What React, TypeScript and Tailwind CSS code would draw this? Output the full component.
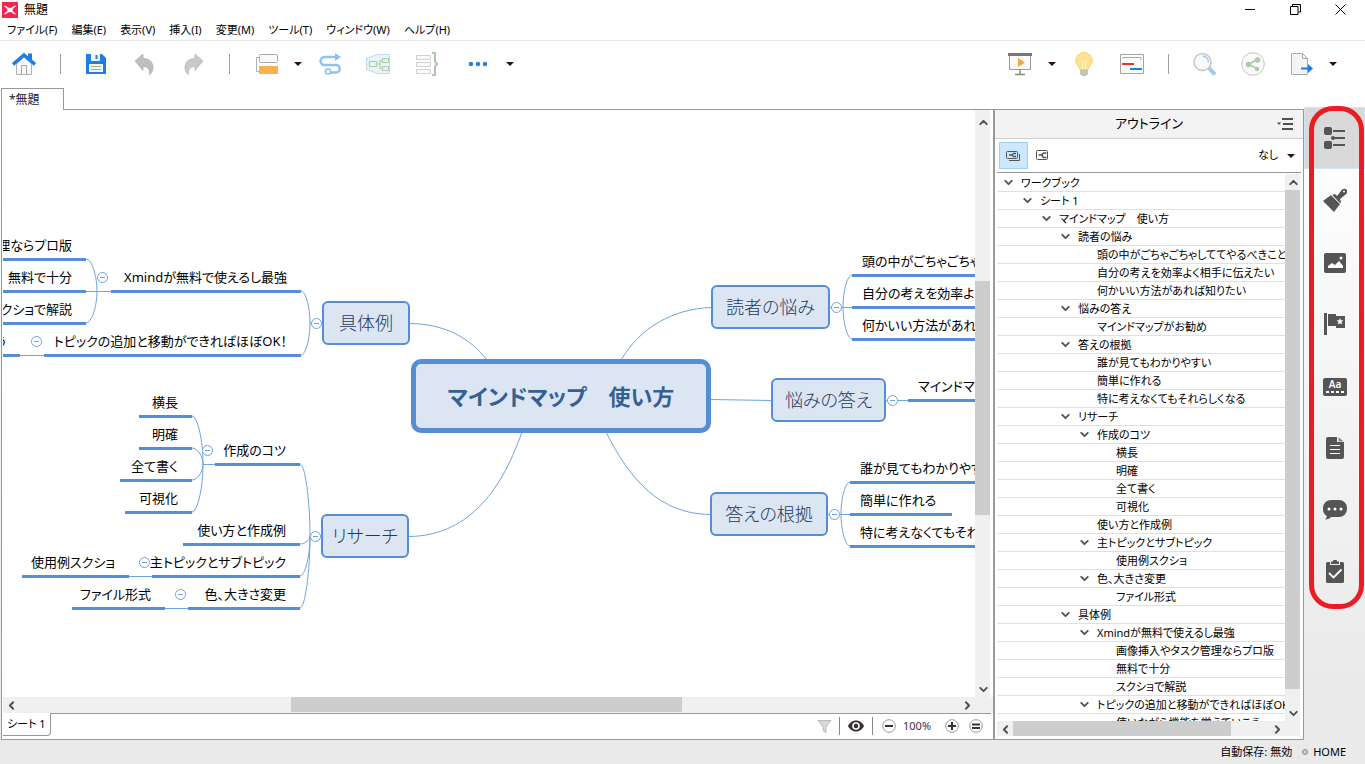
import React, { useState } from 'react';
import { ChevronDown, ChevronLeft, ChevronRight, ChevronUp } from 'lucide-react';

const menus = ['ファイル(F)', '編集(E)', '表示(V)', '挿入(I)', '変更(M)', 'ツール(T)', 'ウィンドウ(W)', 'ヘルプ(H)'];

const outline = [
  { level: 0, text: 'ワークブック', open: true },
  { level: 1, text: 'シート 1', open: true },
  { level: 2, text: 'マインドマップ　使い方', open: true },
  { level: 3, text: '読者の悩み', open: true },
  { level: 4, text: '頭の中がごちゃごちゃしててやるべきことが' },
  { level: 4, text: '自分の考えを効率よく相手に伝えたい' },
  { level: 4, text: '何かいい方法があれば知りたい' },
  { level: 3, text: '悩みの答え', open: true },
  { level: 4, text: 'マインドマップがお勧め' },
  { level: 3, text: '答えの根拠', open: true },
  { level: 4, text: '誰が見てもわかりやすい' },
  { level: 4, text: '簡単に作れる' },
  { level: 4, text: '特に考えなくてもそれらしくなる' },
  { level: 3, text: 'リサーチ', open: true },
  { level: 4, text: '作成のコツ', open: true },
  { level: 5, text: '横長' },
  { level: 5, text: '明確' },
  { level: 5, text: '全て書く' },
  { level: 5, text: '可視化' },
  { level: 4, text: '使い方と作成例' },
  { level: 4, text: '主トピックとサブトピック', open: true },
  { level: 5, text: '使用例スクショ' },
  { level: 4, text: '色、大きさ変更', open: true },
  { level: 5, text: 'ファイル形式' },
  { level: 3, text: '具体例', open: true },
  { level: 4, text: 'Xmindが無料で使えるし最強', open: true },
  { level: 5, text: '画像挿入やタスク管理ならプロ版' },
  { level: 5, text: '無料で十分' },
  { level: 5, text: 'スクショで解説' },
  { level: 4, text: 'トピックの追加と移動ができればほぼOK！', open: true },
  { level: 5, text: '使いながら機能を覚えていこう' },
];

// map coordinates of the canvas' top left corner
const scroll = { x: 3, y: 110 };

const topics = [
  { text: '具体例', x: 322, y: 301, w: 88 },
  { text: 'リサーチ', x: 321, y: 514, w: 88 },
  { text: '読者の悩み', x: 711, y: 285, w: 119 },
  { text: '悩みの答え', x: 771, y: 378, w: 115 },
  { text: '答えの根拠', x: 710, y: 492, w: 118 },
];

// y is the underline of the subtopic
const leftLeaves = [
  { text: '画像挿入やタスク管理ならプロ版', x: -140, w: 226, y: 258 },
  { text: '無料で十分', x: -10, w: 96, y: 290 },
  { text: 'スクショで解説', x: -24, w: 110, y: 322 },
  { text: '使いながら機能を覚えていこう', x: -190, w: 210, y: 354 },
  { text: 'Xmindが無料で使えるし最強', x: 111, w: 190, y: 290 },
  { text: 'トピックの追加と移動ができればほぼOK！', x: 44, w: 257, y: 354 },
  { text: '横長', x: 139, w: 53, y: 415 },
  { text: '明確', x: 139, w: 53, y: 447 },
  { text: '全て書く', x: 120, w: 72, y: 479 },
  { text: '可視化', x: 125, w: 67, y: 511 },
  { text: '作成のコツ', x: 215, w: 85, y: 463 },
  { text: '使い方と作成例', x: 183, w: 117, y: 543 },
  { text: '主トピックとサブトピック', x: 152, w: 148, y: 575 },
  { text: '使用例スクショ', x: 22, w: 107, y: 575 },
  { text: '色、大きさ変更', x: 188, w: 112, y: 607 },
  { text: 'ファイル形式', x: 72, w: 93, y: 607 },
];

const rightLeaves = [
  { text: '頭の中がごちゃごちゃしててやるべきことが', x: 852, w: 300, y: 274 },
  { text: '自分の考えを効率よく相手に伝えたい', x: 852, w: 260, y: 306 },
  { text: '何かいい方法があれば知りたい', x: 852, w: 220, y: 338 },
  { text: 'マインドマップがお勧め', x: 908, w: 170, y: 399 },
  { text: '誰が見てもわかりやすい', x: 850, w: 180, y: 481 },
  { text: '簡単に作れる', x: 850, w: 102, y: 513 },
  { text: '特に考えなくてもそれらしくなる', x: 850, w: 220, y: 545 },
];

const folds = [
  [102, 277], [36, 341], [316, 323], [207, 450], [315, 536],
  [144, 562], [180, 594], [836, 307], [892, 400], [834, 514],
];

// curve from a parent's joint to the end of a child's underline
const bend = (px: number, py: number, cx: number, cy: number) =>
  `M${cx} ${cy}C${(px + cx) / 2} ${cy} ${px} ${(py + cy) / 2} ${px} ${py}`;

const lines = [
  'M410 323.5C445 324 470 338 487 360',
  'M409 536.5C465 536 500 495 522 432',
  'M711 307.5C672 309 640 328 621 360',
  'M710 514.5C660 514 630 480 606 432',
  'M710 399.5L771 400.5',
  'M322 323.5H310', bend(310, 323, 301, 291), bend(310, 323, 301, 355),
  'M111 291.5H86', bend(97, 291, 86, 259), bend(97, 291, 86, 323),
  'M44 355.5H20',
  'M321 536.5H310', bend(310, 536, 300, 464), bend(310, 536, 300, 544), bend(310, 536, 300, 576), bend(310, 536, 300, 608),
  'M215 464.5H203', bend(203, 464, 192, 416), bend(203, 464, 192, 448), bend(203, 464, 192, 480), bend(203, 464, 192, 512),
  'M152 576.5H129', 'M188 608.5H165',
  'M830 307.5H852', bend(843, 307, 852, 275), bend(843, 307, 852, 339),
  'M886 400.5H908',
  'M828 514.5H850', bend(841, 514, 850, 482), bend(841, 514, 850, 546),
];

const Caret = () => (
  <svg className="w-2 h-4 shrink-0" viewBox="0 0 8 16" fill="#2b1210">
    <path d="M0 6h8l-4 4z" />
  </svg>
);

const ToolButton: React.FC<{ label: string; children: React.ReactNode }> = ({ label, children }) => (
  <button type="button" aria-label={label} className="w-6 h-6 shrink-0">
    <svg className="w-6 h-6" viewBox="0 0 24 24" fill="none">{children}</svg>
  </button>
);

const Divider = () => <span className="w-px h-5 bg-[#a0a0a0]" />;

const Toolbar = () => (
  <div className="flex items-center h-[47px] pl-3 pr-7 pb-[2px] gap-6">
    <ToolButton label="ホーム">
      <path d="M4.500 12v10.500h15V12L12 5z" fill="#fafafa" stroke="#b0b0b0" />
      <path d="M9.500 22v-8.500h5V22" stroke="#a8a8a8" />
      <path d="M16 1.500h4v7l-4-3z" fill="#1f7fe0" />
      <path d="M1 12.500L12 3l11 9.500" stroke="#1f7fe0" strokeWidth="3.500" />
    </ToolButton>
    <Divider />
    <ToolButton label="保存">
      <path d="M1 2h16l4 4v16H1z" fill="#1f7fe0" />
      <path d="M6 2h9v7H6z" fill="#f4f4f4" />
      <path d="M11.500 3v4" stroke="#1f7fe0" strokeWidth="2" />
      <path d="M4 12h14v8H4z" fill="#f4f4f4" />
      <path d="M6 14.500h10M6 17.500h10" stroke="#aaa" />
    </ToolButton>
    <ToolButton label="元に戻す">
      <path d="M2 9l8-7v4.500c7 0 10 4 10 9 0 3-1 5.500-3.500 7 .5-5-1.500-8-6.500-8v4z" fill="#bcc0bc" stroke="#acaeac" strokeWidth=".7" />
    </ToolButton>
    <ToolButton label="やり直し">
      <path d="M22 9l-8-7v4.500c-7 0-10 4-10 9 0 3 1 5.500 3.500 7-.5-5 1.500-8 6.500-8v4z" fill="#c4ccc4" stroke="#b0b6b0" strokeWidth=".7" />
    </ToolButton>
    <Divider />
    <div className="flex items-center gap-4 -mr-2">
      <ToolButton label="トピック">
        <path d="M5 5.500H2.500v14H5" stroke="#b0b0b0" />
        <rect x="5.500" y="2.500" width="18" height="8" rx="1" fill="#fafafa" stroke="#aaa" />
        <path d="M5 14h19v8H5z" fill="#fbb04e" />
      </ToolButton>
      <button type="button" aria-label="トピックの種類"><Caret /></button>
    </div>
    <ToolButton label="関連">
      <path d="M17 5H6.500a4 4 0 000 8H18a3.700 3.700 0 010 7.500h-5.500" stroke="#8ec1f3" strokeWidth="2.400" />
      <path d="M17 1l6 4-6 4z" fill="#8ec1f3" />
      <circle cx="10" cy="19.500" r="2.500" fill="#fff" stroke="#8ec1f3" strokeWidth="1.600" />
    </ToolButton>
    <ToolButton label="境界線">
      <path d="M.5 6.500l11-4h12v19h-12l-11-4z" fill="#e4f6f6" stroke="#9dc4f0" strokeDasharray="1.500 1" />
      <path d="M3.500 9.500h7v5h-7zM16.500 6.500h6v4h-6zM16.500 14.500h6v4h-6zM11 12h3M16 8.500h-2v8h2" stroke="#b6cdb2" strokeWidth="1.200" />
    </ToolButton>
    <ToolButton label="要約">
      <path d="M2.500 3.500h14v4h-14zM2.500 10.500h14v4h-14zM2.500 17.500h14v4h-14z" fill="#fafafa" stroke="#d2d2d2" />
      <path d="M18 1h3v9l2.500 2-2.500 2v9h-3" stroke="#b3c4b0" strokeWidth="2" />
    </ToolButton>
    <div className="flex items-center gap-4 ml-1">
      <ToolButton label="その他">
        <circle cx="5" cy="12" r="2.200" fill="#1f7fe0" />
        <circle cx="12" cy="12" r="2.200" fill="#1f7fe0" />
        <circle cx="19" cy="12" r="2.200" fill="#1f7fe0" />
      </ToolButton>
      <button type="button" aria-label="その他の挿入"><Caret /></button>
    </div>

    <div className="flex items-center gap-6 ml-auto">
      <div className="flex items-center gap-4 -mr-2">
        <ToolButton label="プレゼンテーション">
          <path d="M1.500 3v14.500h21V3" fill="#fafafa" stroke="#9c9c9c" />
          <path d="M0 1h24v3H0z" fill="#777" />
          <path d="M10 6l7 4.500-7 4.500z" fill="#f7a63c" />
          <path d="M12 18v4M7 22.500h10" stroke="#888" strokeWidth="1.500" />
        </ToolButton>
        <button type="button" aria-label="プレゼンテーションの種類"><Caret /></button>
      </div>
      <ToolButton label="ブレインストーミング">
        <path d="M12 .5a8.300 8.300 0 00-8.300 8.300c0 4 3.800 5.200 4.300 8.700h8c.5-3.500 4.300-4.700 4.300-8.700A8.300 8.300 0 0012 .5z" fill="#ffe391" stroke="#f4d06c" />
        <path d="M9 8l3 2 3-2M10.500 17V9.500M13.500 17V9.500" stroke="#fff3c8" />
        <path d="M8 18h8v4l-2 2h-4l-2-2z" fill="#b8c4c4" />
        <path d="M8 20l8-1M8 22l8-1" stroke="#f2c65a" />
      </ToolButton>
      <ToolButton label="ガントチャート">
        <path d="M.5 2.500h23v19H.5z" fill="#fafafa" stroke="#a4a4a4" />
        <path d="M3 7V5.500h18V8" stroke="#aaa" />
        <path d="M2 12h12" stroke="#e8323c" strokeWidth="2" />
        <path d="M10 17h12" stroke="#1f7fe0" strokeWidth="2" />
      </ToolButton>
      <Divider />
      <ToolButton label="検索">
        <path d="M15.500 15.500l6.500 7" stroke="#9cc8f4" strokeWidth="4" />
        <circle cx="9.500" cy="10" r="8.500" fill="#f7fafc" stroke="#c4c8cc" strokeWidth="1.500" />
        <path d="M9.500 4a6 6 0 016 6" stroke="#9cc8f4" strokeWidth="1.500" />
      </ToolButton>
      <ToolButton label="共有">
        <circle cx="12" cy="12" r="11.300" fill="#fafafa" stroke="#c4c8c4" />
        <path d="M16 7.500L7.500 12.500l8.500 4" stroke="#a9cba6" strokeWidth="1.500" />
        <circle cx="16.500" cy="8" r="2.700" fill="#a9cba6" />
        <circle cx="7.500" cy="12.500" r="2.700" fill="#a9cba6" />
        <circle cx="16" cy="17" r="2.200" fill="#a9cba6" />
      </ToolButton>
      <div className="flex items-center gap-4">
        <ToolButton label="エクスポート">
          <path d="M2.500 1.500h11l5 5v16h-16z" fill="#f4f4f4" stroke="#aaa" />
          <path d="M13.500 1.500v5h5" stroke="#aaa" />
          <path d="M12 16.500h7" stroke="#1f7fe0" strokeWidth="2" />
          <path d="M19 12l5 4.500-5 4.500z" fill="#1f7fe0" />
        </ToolButton>
        <button type="button" aria-label="エクスポートの種類"><Caret /></button>
      </div>
    </div>
  </div>
);

interface ScrollbarProps {
  vertical?: boolean;
  before: number;
  size: number;
  after: number;
}

const Scrollbar: React.FC<ScrollbarProps> = ({ vertical, before, size, after }) => {
  const Back = vertical ? ChevronUp : ChevronLeft;
  const Forward = vertical ? ChevronDown : ChevronRight;
  return (
    <div className={`flex shrink-0 bg-[#f0f0f0] text-[#505050] ${vertical ? 'flex-col w-[15px]' : 'h-[15px]'}`}>
      <button type="button" aria-label="戻る" className="flex items-center justify-center w-4 h-4 shrink-0">
        <Back size={13} strokeWidth={3.5} />
      </button>
      <span style={{ flexGrow: before }} />
      <span className="bg-[#cdcdcd]" style={{ flexGrow: size }} />
      <span style={{ flexGrow: after }} />
      <button type="button" aria-label="進む" className="flex items-center justify-center w-4 h-4 shrink-0">
        <Forward size={13} strokeWidth={3.5} />
      </button>
    </div>
  );
};

const MindMap = () => (
  <div className="relative flex-1 min-w-0 overflow-hidden bg-white text-[13px] leading-6 text-black whitespace-nowrap">
    <svg className="absolute inset-0 w-full h-full" fill="none" stroke="#6fa3df">
      <g transform={`translate(${-scroll.x} ${-scroll.y})`}>
        {lines.map(d => <path key={d} d={d} />)}
      </g>
    </svg>
    {leftLeaves.map(leaf => (
      <div
        key={leaf.text}
        className="absolute flex justify-end h-7 pr-[14px] border-b-3 border-[#558ed5]"
        style={{ left: leaf.x - scroll.x, top: leaf.y - 25 - scroll.y, width: leaf.w }}
      >
        {leaf.text}
      </div>
    ))}
    {rightLeaves.map(leaf => (
      <div
        key={leaf.text}
        className="absolute h-7 pl-[10px] border-b-3 border-[#558ed5]"
        style={{ left: leaf.x - scroll.x, top: leaf.y - 25 - scroll.y, width: leaf.w }}
      >
        {leaf.text}
      </div>
    ))}
    {topics.map(topic => (
      <div
        key={topic.text}
        className="absolute flex items-center justify-center h-11 rounded-md border-2 border-[#558ed5] bg-[#dce6f2] text-lg font-light text-[#1f3864]"
        style={{ left: topic.x - scroll.x, top: topic.y - scroll.y, width: topic.w }}
      >
        {topic.text}
      </div>
    ))}
    <div
      className="absolute flex items-center justify-center w-[300px] h-[74px] rounded-[10px] border-5 border-[#558ed5] bg-[#dce6f2] text-[22px] font-bold text-[#376092]"
      style={{ left: 411 - scroll.x, top: 359 - scroll.y }}
    >
      マインドマップ　使い方
    </div>
    {folds.map(([x, y]) => (
      <button
        key={`${x}-${y}`}
        type="button"
        aria-label="折りたたむ"
        className="absolute w-[11px] h-[11px]"
        style={{ left: x - 5 - scroll.x, top: y - 5 - scroll.y }}
      >
        <svg className="block" width="11" height="11" fill="#fff" stroke="#6fa3df">
          <circle cx="5.500" cy="5.500" r="5" />
          <path d="M3 5.500h5" />
        </svg>
      </button>
    ))}
  </div>
);

const SheetBar = () => (
  <div className="flex items-start justify-between h-[26px] mr-[2px] border-t border-[#999]">
    <button type="button" className="h-[23px] px-1 -mt-px bg-white border-r border-b border-[#999] rounded-br-sm">シート 1</button>
    <div className="flex items-center h-6 pr-2 text-[#3c3038]">
      <button type="button" aria-label="フィルター" className="mr-[7px]">
        <svg width="15" height="15" viewBox="0 0 15 15" fill="#d8d8d8" stroke="#bbb">
          <path d="M1 1.500h13L9 8v5.500l-3-2V8z" />
        </svg>
      </button>
      <span className="w-px h-[18px] bg-[#888]" />
      <button type="button" aria-label="表示" className="mx-2">
        <svg width="16" height="14" viewBox="0 0 16 14">
          <path d="M0 7c2-4 5-5.500 8-5.500S14 3 16 7c-2 4-5 5.500-8 5.500S2 11 0 7z" fill="#3c3038" />
          <circle cx="8" cy="7" r="3.800" fill="#fff" />
          <circle cx="8" cy="7" r="2.300" fill="#3c3038" />
        </svg>
      </button>
      <span className="w-px h-[18px] bg-[#888]" />
      <button type="button" aria-label="縮小" className="ml-[9px]">
        <svg width="14" height="14" fill="none" stroke="#999">
          <circle cx="7" cy="7" r="6.300" />
          <path d="M3 7h8" stroke="#3c3038" strokeWidth="2" />
        </svg>
      </button>
      <span className="w-[49px] pl-[7px]">100%</span>
      <button type="button" aria-label="拡大">
        <svg width="14" height="14" fill="none" stroke="#999">
          <circle cx="7" cy="7" r="6.300" />
          <path d="M3 7h8M7 3v8" stroke="#3c3038" strokeWidth="2" />
        </svg>
      </button>
      <button type="button" aria-label="ウィンドウに合わせる" className="ml-[10px]">
        <svg width="14" height="14" fill="none" stroke="#999">
          <circle cx="7" cy="7" r="6.300" />
          <path d="M3 5.500h8M3 9h8" stroke="#3c3038" strokeWidth="1.800" />
        </svg>
      </button>
    </div>
  </div>
);

const OutlinePanel = () => (
  <section className="flex flex-col shrink-0 w-[311px] bg-white border-l-2 border-r border-b border-[#999]">
    <header className="grid grid-cols-[1fr_auto_1fr] items-center h-[29px] shrink-0 px-[10px] bg-[#f3f3f3] border-b border-[#ccc]">
      <h2 className="col-start-2 text-[13px]">アウトライン</h2>
      <button type="button" aria-label="ビューメニュー" className="justify-self-end">
        <svg width="16" height="12" viewBox="0 0 16 12" fill="none" stroke="#505050" strokeWidth="2">
          <path d="M5 1h11M6 6h10M5 11h11" />
          <path d="M0 4.500h4L2 7z" fill="#505050" stroke="none" />
        </svg>
      </button>
    </header>
    <div className="flex items-center h-[34px] shrink-0 mx-[2px] pl-[2px] border-b border-[#999]">
      <button type="button" aria-label="ワークブック全体" className="flex items-center justify-center w-[29px] h-[27px] bg-[#cce8ff] border border-[#99d1ff]">
        <svg width="15" height="12" fill="none" stroke="#555">
          <rect x=".5" y="1.500" width="11" height="7" rx="1" />
          <path d="M3 10.500h10.500V4" />
          <path d="M3 5h3M7 3.500h3M7 6.500h3M6.500 3.500v3" strokeWidth="1.300" />
        </svg>
      </button>
      <button type="button" aria-label="現在のシート" className="flex items-center justify-center w-[29px] h-[27px]">
        <svg width="13" height="11" fill="none" stroke="#555">
          <rect x=".5" y=".5" width="11" height="9" rx="1" />
          <path d="M2.500 5h4M7 3h3.500M7 7.500h3.500M6.500 3v4.500" strokeWidth="1.600" />
        </svg>
      </button>
      <div className="relative flex items-center ml-auto pr-[6px]">
        <select aria-label="ラベルの絞り込み" className="appearance-none w-[37px] bg-transparent text-[11px]">
          <option>なし</option>
        </select>
        <span className="absolute right-[6px] pointer-events-none"><Caret /></span>
      </div>
    </div>
    <div className="flex flex-1 min-h-0 pl-[2px] pt-px pr-[3px]">
      <div className="flex flex-col flex-1 min-w-0">
        <ul className="flex-1 min-h-0 overflow-hidden whitespace-nowrap">
          {outline.map(item => (
            <li
              key={item.text}
              className="flex items-center h-[18px] border-b border-[#e0e0e0] leading-4"
              style={{ paddingLeft: 5 + item.level * 19 }}
            >
              <span className="flex w-[19px] shrink-0">
                {item.open && (
                  <button type="button" aria-label={`${item.text}を閉じる`}>
                    <ChevronDown size={13} strokeWidth={3.5} color="#555" />
                  </button>
                )}
              </span>
              {item.text}
            </li>
          ))}
        </ul>
        <Scrollbar before={0} size={215} after={38} />
      </div>
      <div className="flex flex-col pb-[15px] bg-[#f0f0f0]">
        <div className="flex flex-1">
          <Scrollbar vertical before={0} size={495} after={16} />
        </div>
      </div>
    </div>
    <div className="h-[3px] shrink-0" />
  </section>
);

const views = [
  {
    label: 'アウトライン',
    icon: (
      <>
        <rect x="1" y="1" width="8" height="8" rx="2" />
        <rect x="1" y="15" width="8" height="8" rx="2" />
        <circle cx="10" cy="12" r="2" />
        <path d="M10 4h12v2H10zM10 11h12v2H10zM10 18h12v2H10z" />
      </>
    ),
  },
  {
    label: 'フォーマット',
    icon: (
      <>
        <path d="M0 13l8-6 9 9-6 8z" />
        <path d="M9 7l3-1 2 2 4-5a3.700 3.700 0 015-2 3.700 3.700 0 01-1 6l-5 4 1 3-1 2z" />
        <path d="M8 6.500l9.500 9.500" stroke="#f4f4f4" strokeWidth="1" />
        <circle cx="21" cy="3.500" r="1" fill="#fafafa" />
      </>
    ),
  },
  {
    label: '画像',
    icon: (
      <>
        <rect x="1" y="3" width="22" height="20" rx="2" />
        <path d="M5 18v-2l4-3 3 2 4-4 4 5v2z" fill="#fff" />
        <circle cx="18" cy="8" r="1.500" fill="#fff" />
      </>
    ),
  },
  {
    label: 'マーカー',
    icon: (
      <>
        <path d="M1 1h3v22H1zM5 2h8v2h9v12h-9v-2H5z" />
        <path d="M17 6l1 2.200 2.400.3-1.800 1.600.5 2.400-2.100-1.200-2.100 1.200.5-2.400-1.800-1.600 2.400-.3z" fill="#fff" />
      </>
    ),
  },
  {
    label: 'ラベル',
    icon: (
      <>
        <rect x="0" y="4" width="24" height="18" rx="2" />
        <text x="12" y="14" textAnchor="middle" fontSize="10" fontWeight="600" fill="#fff">Aa</text>
        <path d="M3 18h18" stroke="#fff" strokeWidth="2" strokeDasharray="3 2" />
      </>
    ),
  },
  {
    label: 'ノート',
    icon: (
      <>
        <path d="M5 1h9v5h7v15a2 2 0 01-2 2H5a2 2 0 01-2-2V3a2 2 0 012-2z" />
        <path d="M15.500 1l5 4.500h-5z" fill="#888" />
        <path d="M7 9.500h10M7 13.500h10M7 17.500h10" stroke="#fff" strokeWidth="1.200" />
      </>
    ),
  },
  {
    label: 'コメント',
    icon: (
      <>
        <path d="M8 2h8a8 8 0 018 8v1a8 8 0 01-8 8H8c-1 1.500-3 2.500-6 2.500 1-1 1.800-2 1.800-3.500A8 8 0 010 11v-1a8 8 0 018-8z" />
        <circle cx="6" cy="11" r="1.500" fill="#fff" />
        <circle cx="12" cy="11" r="1.500" fill="#fff" />
        <circle cx="18" cy="11" r="1.500" fill="#fff" />
      </>
    ),
  },
  {
    label: 'タスク情報',
    icon: (
      <>
        <path d="M4.500 2H7v3h10V2h2.500A1.500 1.500 0 0121 3.500v18a1.500 1.500 0 01-1.500 1.500h-15A1.500 1.500 0 013 21.500v-18A1.500 1.500 0 014.500 2z" />
        <path d="M8 4V1.500h2a2 2 0 014 0h2V4z" />
        <path d="M6 13l4.500 4.500 8-8" stroke="#fff" strokeWidth="1.800" fill="none" />
      </>
    ),
  },
];

const ViewRail = () => {
  const [active, setActive] = useState('アウトライン');

  return (
    <nav className="shrink-0 w-[61px] pt-[19px]">
      <div className="relative">
        {views.map(view => (
          <button
            key={view.label}
            type="button"
            aria-label={view.label}
            onClick={() => setActive(view.label)}
            className={`flex items-center justify-center w-full h-[62px] border ${
              active === view.label ? 'bg-[#d9d9d9] border-[#cfe6f5]' : 'border-transparent'
            }`}
          >
            <svg width="24" height="24" viewBox="0 0 24 24" fill="#555">{view.icon}</svg>
          </button>
        ))}
        <div className="absolute -top-px -bottom-[6px] left-[5px] right-px border-5 border-[#ed1c24] rounded-[24px] pointer-events-none" />
      </div>
    </nav>
  );
};

const App: React.FC = () => {
  return (
    <div className="flex flex-col h-screen overflow-hidden bg-linear-to-b from-white from-15% to-[#eaeaea] to-90% text-[11px] text-black [font-family:'Noto_Sans','Noto_Sans_CJK_JP',sans-serif] [font-feature-settings:'palt']">
      <div className="flex items-center h-[19px] pl-[2px] bg-white">
        <svg width="16" height="16" viewBox="0 0 16 16">
          <rect width="16" height="16" fill="#f8234f" />
          <path d="M2 3.500c3 .5 4 2.500 6 2.500s3-2 6-2.500c-.5 2-3.500 2.500-3.500 4.500s3 2.500 3.500 4.500c-3-.5-4-2.500-6-2.500s-3 2-6 2.500C2.500 10.500 5.500 10 5.500 8S2.500 5.500 2 3.500z" fill="#fff" />
        </svg>
        <h1 className="ml-[6px] text-xs">無題</h1>
        <div className="flex items-center ml-auto pr-[19px] gap-[34px]">
          <button type="button" aria-label="最小化">
            <svg width="11" height="11" stroke="#000"><path d="M0 5.500h10" /></svg>
          </button>
          <button type="button" aria-label="元に戻す（縮小）">
            <svg width="11" height="11" fill="none" stroke="#000"><path d="M.5 2.500h7.500v8H.5zM2.500 2V.5h8v7.500H8.500" /></svg>
          </button>
          <button type="button" aria-label="閉じる">
            <svg width="11" height="11" stroke="#000"><path d="M.5.5l10 10M10.500.5l-10 10" /></svg>
          </button>
        </div>
      </div>
      <div className="flex items-center h-[22px] pt-[2px] pl-[7px] gap-[14px] bg-white border-b border-[#e8e8e8]">
        {menus.map(menu => <button key={menu} type="button">{menu}</button>)}
      </div>
      <Toolbar />
      <div className="flex flex-1 min-h-0">
        <div className="flex flex-col flex-1 min-w-0">
          <div className="flex h-[22px] shrink-0 pl-px">
            <button type="button" className="w-[63px] pl-[7px] text-left text-xs bg-white border-t border-x border-[#999] text-[#223]">*無題</button>
            <span className="flex-1 border-b border-[#999]" />
          </div>
          <div className="flex flex-1 min-h-0 pl-px">
            <main className="flex flex-col flex-1 min-w-0 pl-px bg-white border-l border-b border-[#999]">
              <div className="flex flex-1 min-h-0 pr-[3px]">
                <MindMap />
                <div className="flex pt-1 bg-[#f0f0f0]">
                  <Scrollbar vertical before={151} size={233} after={166} />
                </div>
              </div>
              <div className="pr-[18px] pb-px bg-[#f0f0f0]">
                <Scrollbar before={272} size={390} after={277} />
              </div>
              <SheetBar />
            </main>
            <OutlinePanel />
          </div>
        </div>
        <ViewRail />
      </div>
      <footer className="flex items-center justify-end h-6 shrink-0 pr-[19px] bg-[#eaeaea]">
        <span>自動保存: 無効</span>
        <span className="w-[6px] h-[6px] ml-[10px] mr-[5px] rounded-full bg-[#ccc] border border-[#888]" />
        <a href="#home">HOME</a>
      </footer>
    </div>
  );
};

export default App;
